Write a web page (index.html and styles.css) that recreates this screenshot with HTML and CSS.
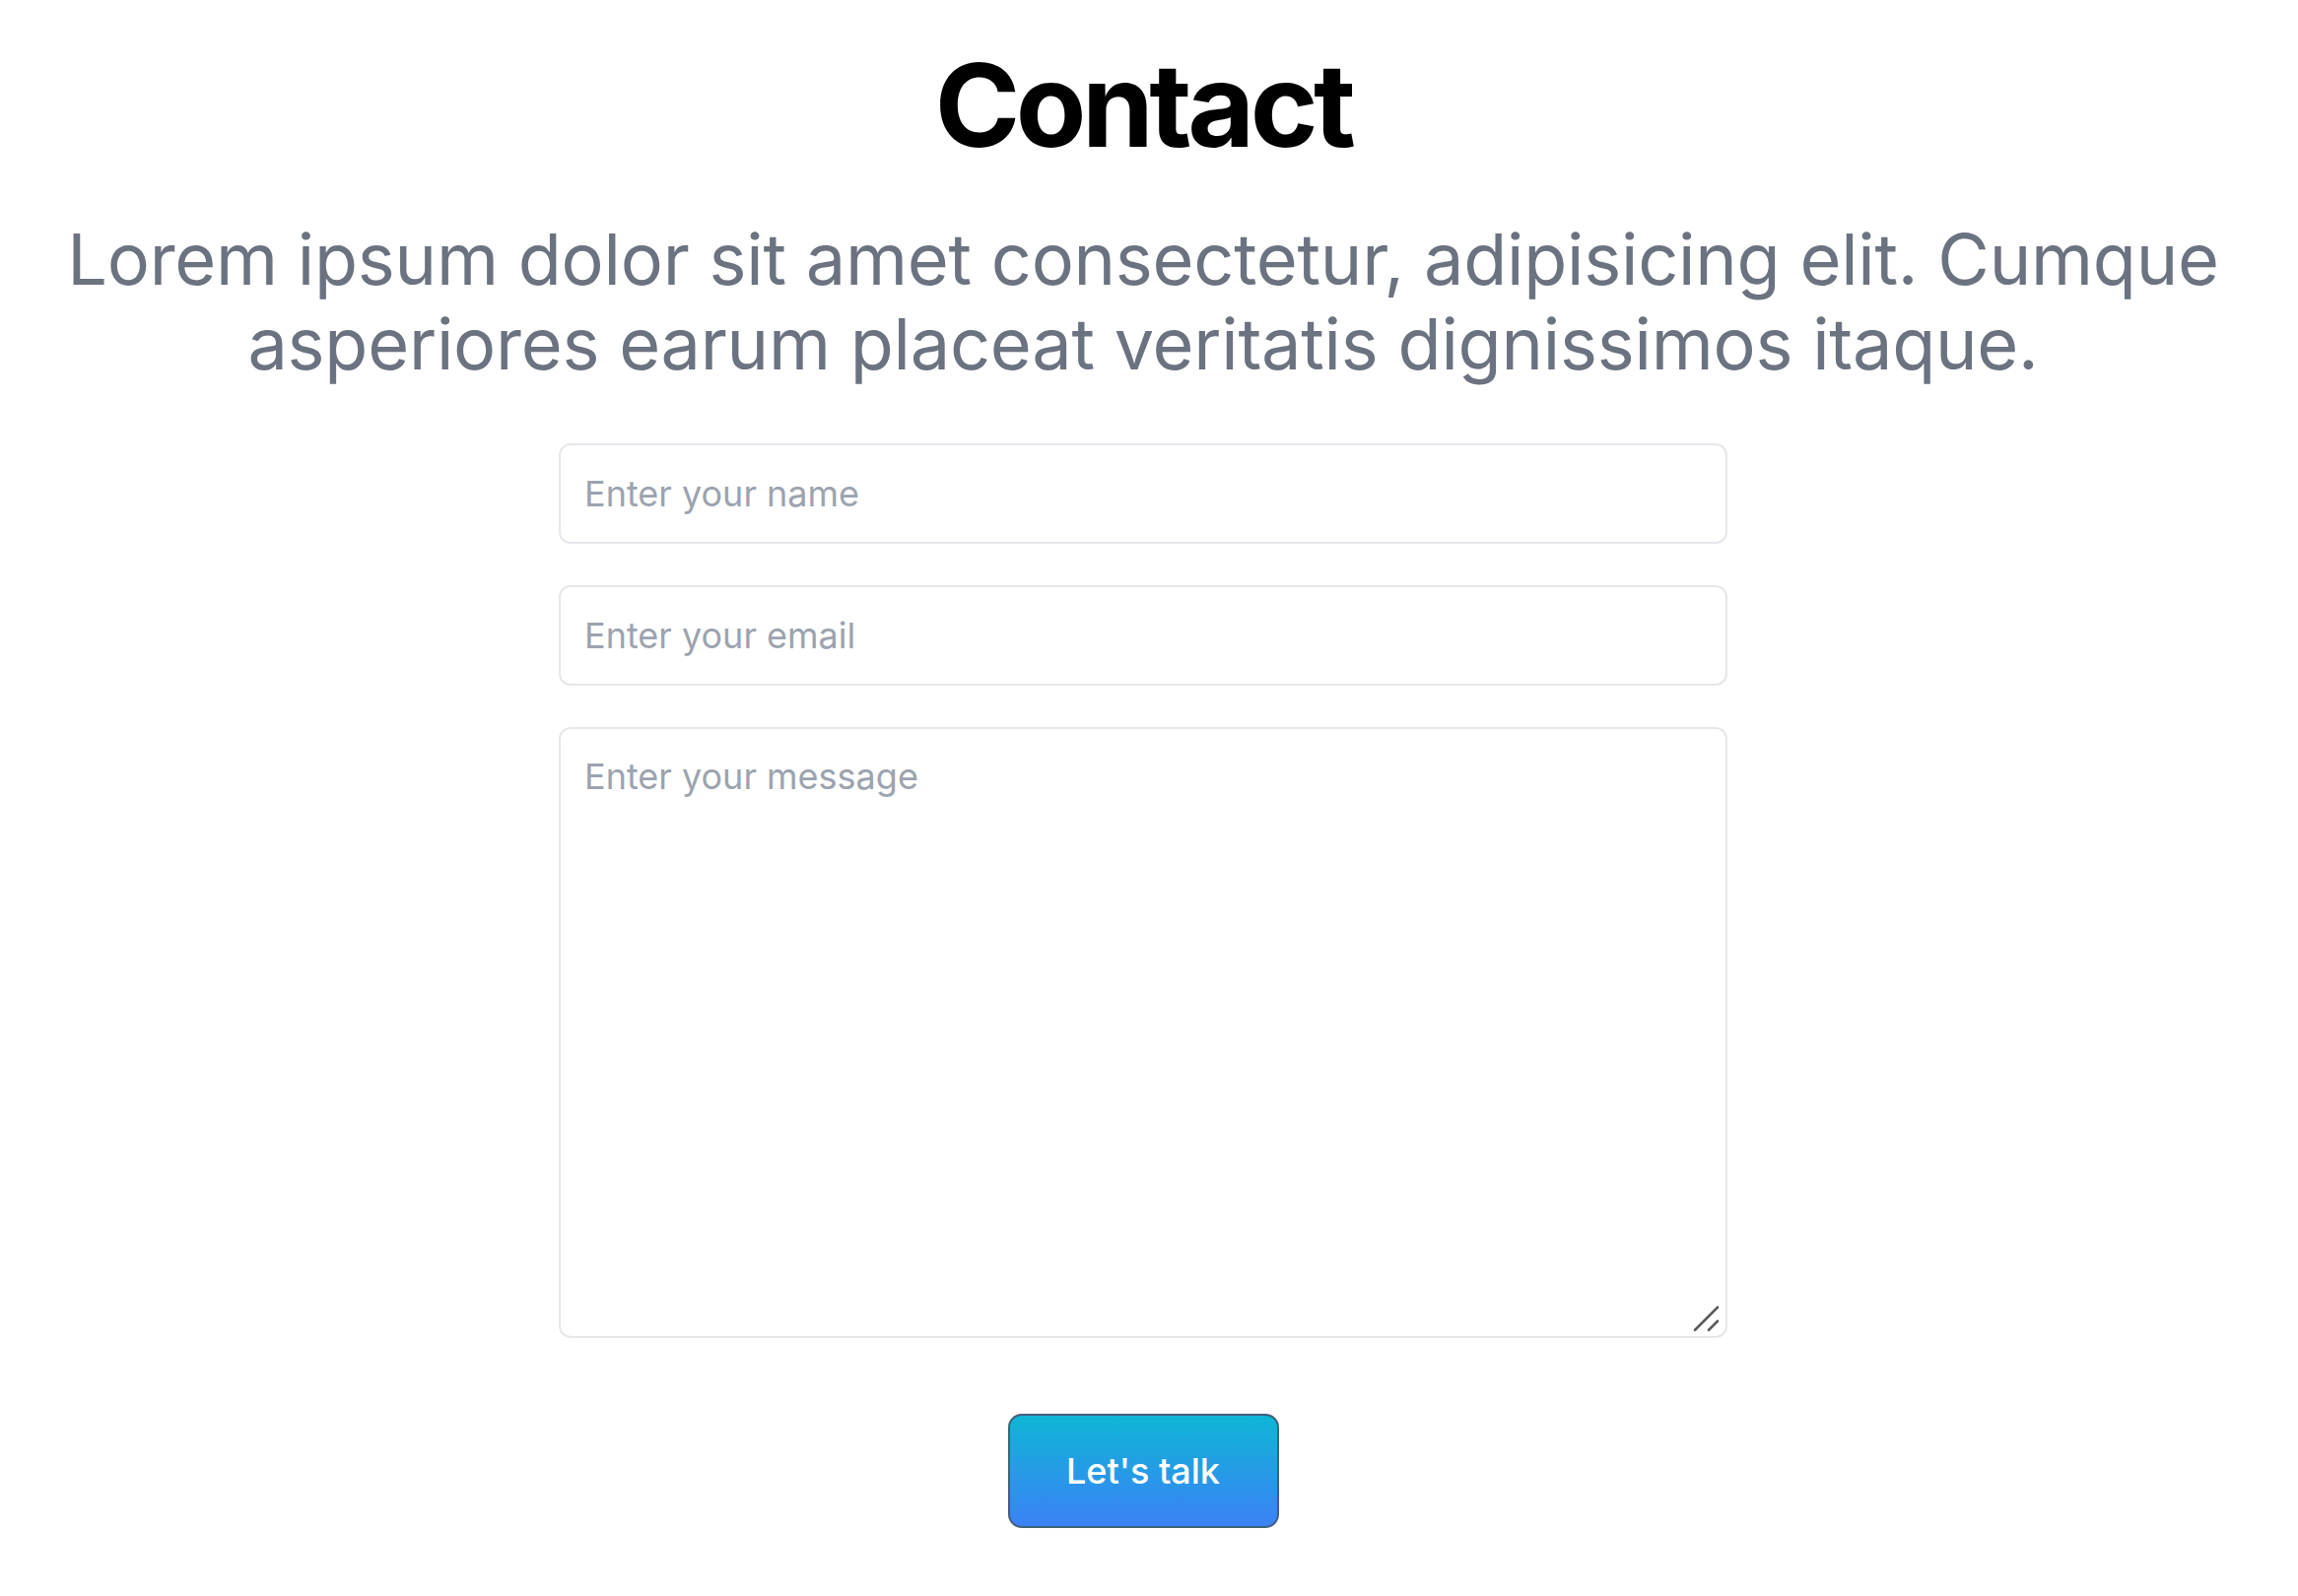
FILE: index.html
```html
<!DOCTYPE html>
<html lang="en">
<head>
<meta charset="utf-8">
<title>Contact</title>
<link rel="stylesheet" href="styles.css">
</head>
<body>
<main class="page">
  <h1 class="title">Contact</h1>
  <p class="lead">Lorem ipsum dolor sit amet consectetur, adipisicing elit. Cumque<br>asperiores earum placeat veritatis dignissimos itaque.</p>
  <form class="form">
    <input class="field" type="text" placeholder="Enter your name">
    <input class="field" type="email" placeholder="Enter your email">
    <div class="area-wrap">
      <textarea class="field area" placeholder="Enter your message"></textarea>
      <svg class="grip" width="40" height="40" viewBox="0 0 40 40" aria-hidden="true">
        <path d="M7 32 L30 9 M21 32 L30 23" stroke="#5b5b5b" stroke-width="2.6" stroke-linecap="round" fill="none"/>
      </svg>
    </div>
    <button class="btn" type="button">Let's talk</button>
  </form>
</main>
</body>
</html>
```

FILE: styles.css
```css
* { box-sizing: border-box; }
html, body { margin: 0; padding: 0; background: #ffffff; }
body { font-family: Inter, "Noto Sans", sans-serif; }

.page {
  width: 2320px;
  display: flex;
  flex-direction: column;
  align-items: center;
  padding-top: 47px;
}

.title {
  margin: 0;
  font-size: 117px;
  line-height: 120px;
  font-weight: 700;
  color: #000;
  letter-spacing: -4.5px;
}

.lead {
  margin: 53px 0 0;
  font-size: 72px;
  line-height: 86px;
  color: #6b7280;
  text-align: center;
  font-weight: 400;
  letter-spacing: -0.25px;
}

.form {
  margin-top: 58px;
  width: 1186px;
  display: flex;
  flex-direction: column;
  align-items: center;
}

.field {
  display: block;
  width: 100%;
  height: 102px;
  border: 2px solid #e5e7eb;
  border-radius: 12px;
  padding: 0 24px;
  font-family: Inter, "Noto Sans", sans-serif;
  font-size: 36px;
  color: #111827;
  background: #fff;
  outline: none;
  margin-bottom: 42px;
}
.field::placeholder { color: #9ca3af; }

.area-wrap {
  position: relative;
  width: 100%;
  margin-bottom: 77px;
}

.area {
  height: 620px;
  padding: 21px 24px 24px;
  line-height: 54px;
  resize: none;
  margin-bottom: 0;
}

.grip {
  position: absolute;
  right: 0;
  bottom: 0;
  pointer-events: none;
}

.btn {
  width: 275px;
  height: 116px;
  border: 2px solid rgba(71, 85, 105, 0.85);
  border-radius: 14px;
  background: linear-gradient(180deg, #0fb5d6 0%, #3b82f6 100%);
  color: #fff;
  font-family: Inter, "Noto Sans", sans-serif;
  font-size: 36px;
  font-weight: 500;
  cursor: pointer;
}
```
